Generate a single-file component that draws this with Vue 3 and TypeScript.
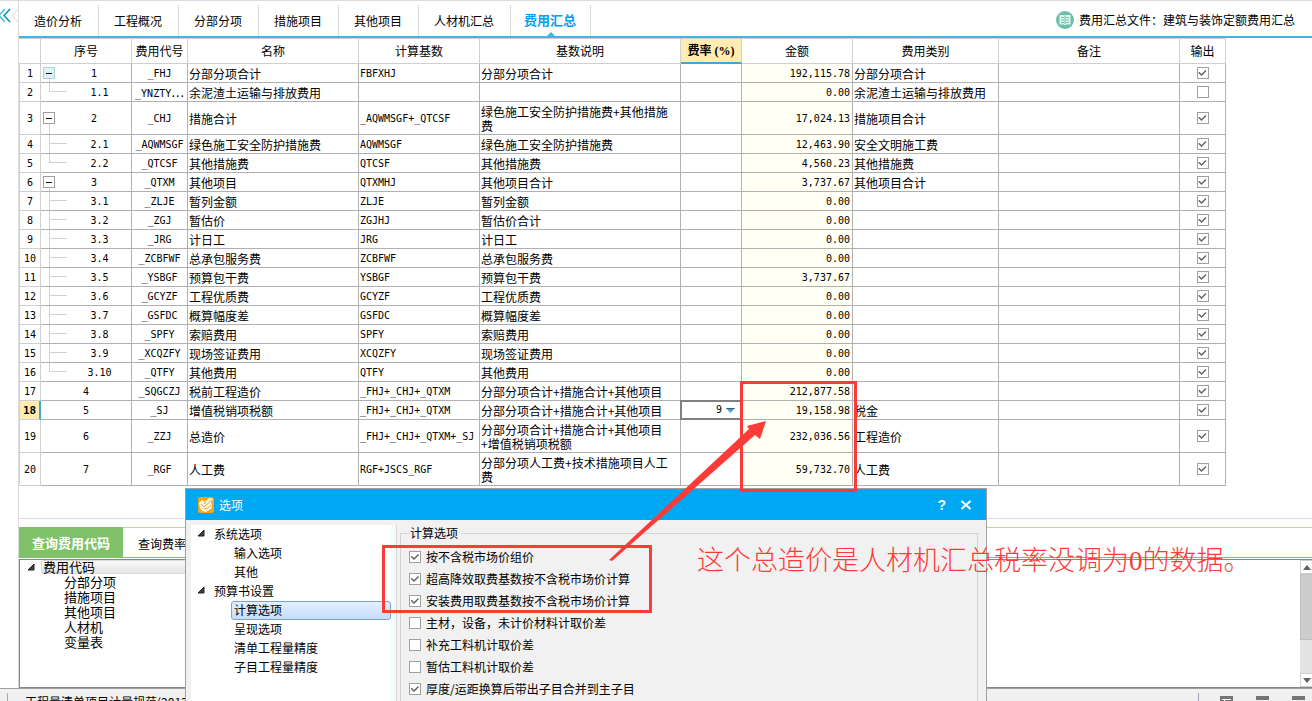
<script setup lang="ts">
import { ref } from 'vue'

type Kind = 'parent' | 'child' | 'last' | 'plain'

interface FeeRow {
  no: string
  kind: Kind
  code: string
  name: string
  base: string
  desc: string
  amount: string
  category: string
  output: boolean
}

const tabs = ['造价分析', '工程概况', '分部分项', '措施项目', '其他项目', '人材机汇总', '费用汇总']
const activeTab = ref('费用汇总')

const headers = ['', '序号', '费用代号', '名称', '计算基数', '基数说明', '费率 (%)', '金额', '费用类别', '备注', '输出']

const row = (
  no: string, kind: Kind, code: string, name: string, base: string,
  desc: string, amount: string, category = '', output = true,
): FeeRow => ({ no, kind, code, name, base, desc, amount, category, output })

const rows = ref<FeeRow[]>([
  row('1', 'parent', '_FHJ', '分部分项合计', 'FBFXHJ', '分部分项合计', '192,115.78', '分部分项合计'),
  row('1.1', 'last', '_YNZTY…', '余泥渣土运输与排放费用', '', '', '0.00', '余泥渣土运输与排放费用', false),
  row('2', 'parent', '_CHJ', '措施合计', '_AQWMSGF+_QTCSF', '绿色施工安全防护措施费+其他措施费', '17,024.13', '措施项目合计'),
  row('2.1', 'child', '_AQWMSGF', '绿色施工安全防护措施费', 'AQWMSGF', '绿色施工安全防护措施费', '12,463.90', '安全文明施工费'),
  row('2.2', 'last', '_QTCSF', '其他措施费', 'QTCSF', '其他措施费', '4,560.23', '其他措施费'),
  row('3', 'parent', '_QTXM', '其他项目', 'QTXMHJ', '其他项目合计', '3,737.67', '其他项目合计'),
  row('3.1', 'child', '_ZLJE', '暂列金额', 'ZLJE', '暂列金额', '0.00'),
  row('3.2', 'child', '_ZGJ', '暂估价', 'ZGJHJ', '暂估价合计', '0.00'),
  row('3.3', 'child', '_JRG', '计日工', 'JRG', '计日工', '0.00'),
  row('3.4', 'child', '_ZCBFWF', '总承包服务费', 'ZCBFWF', '总承包服务费', '0.00'),
  row('3.5', 'child', '_YSBGF', '预算包干费', 'YSBGF', '预算包干费', '3,737.67'),
  row('3.6', 'child', '_GCYZF', '工程优质费', 'GCYZF', '工程优质费', '0.00'),
  row('3.7', 'child', '_GSFDC', '概算幅度差', 'GSFDC', '概算幅度差', '0.00'),
  row('3.8', 'child', '_SPFY', '索赔费用', 'SPFY', '索赔费用', '0.00'),
  row('3.9', 'child', '_XCQZFY', '现场签证费用', 'XCQZFY', '现场签证费用', '0.00'),
  row('3.10', 'last', '_QTFY', '其他费用', 'QTFY', '其他费用', '0.00'),
  row('4', 'plain', '_SQGCZJ', '税前工程造价', '_FHJ+_CHJ+_QTXM', '分部分项合计+措施合计+其他项目', '212,877.58'),
  row('5', 'plain', '_SJ', '增值税销项税额', '_FHJ+_CHJ+_QTXM', '分部分项合计+措施合计+其他项目', '19,158.98', '税金'),
  row('6', 'plain', '_ZZJ', '总造价', '_FHJ+_CHJ+_QTXM+_SJ', '分部分项合计+措施合计+其他项目+增值税销项税额', '232,036.56', '工程造价'),
  row('7', 'plain', '_RGF', '人工费', 'RGF+JSCS_RGF', '分部分项人工费+技术措施项目人工费', '59,732.70', '人工费'),
])
const activeRow = 17
const rate = ref('9')

const codeGroups = ['分部分项', '措施项目', '其他项目', '人材机', '变量表']

const optionTree = [
  { label: '系统选项', items: ['输入选项', '其他'] },
  { label: '预算书设置', items: ['计算选项', '呈现选项', '清单工程量精度', '子目工程量精度'] },
]
const activeOption = ref('计算选项')

const options = ref([
  { label: '按不含税市场价组价', on: true },
  { label: '超高降效取费基数按不含税市场价计算', on: true },
  { label: '安装费用取费基数按不含税市场价计算', on: true },
  { label: '主材，设备，未计价材料计取价差', on: false },
  { label: '补充工料机计取价差', on: false },
  { label: '暂估工料机计取价差', on: false },
  { label: '厚度/运距换算后带出子目合并到主子目', on: true },
])
</script>

<template>
  <div class="app">
    <div class="workspace">
      <aside class="rail">
        <button class="collapse" aria-label="收起">
          <svg width="19" height="26" viewBox="0 0 19 26" fill="none">
            <path d="M5 6L-1 12.500L5 19" stroke="#4dbbe0" stroke-width="1.500" />
            <path d="M10 6L4 12.500L10 19" stroke="#0e8fb5" stroke-width="1.500" />
            <path d="M18.500 5.500L12.500 12.500L18.500 19.500" stroke="#d8d8d8" />
          </svg>
        </button>
      </aside>

      <main class="main">
        <header class="topbar">
          <nav class="tabs">
            <button
              v-for="t in tabs" :key="t" class="tab" :class="{ active: t === activeTab }"
              @click="activeTab = t"
            >{{ t }}</button>
          </nav>
          <div class="file">
            <svg width="18" height="18" viewBox="0 0 18 18">
              <circle cx="9" cy="9" r="9" fill="#6bbfa9" />
              <path d="M3.500 4H8L9 4.500L10 4H14.500V13.500H10L9 14.500L8 13.500H3.500Z" fill="#e3f5f0" />
              <path d="M5 6.500H8M5 9H8M5 11.500H8M10 6.500H13M10 9H13M10 11.500H13M9 5V13" stroke="#6bbfa9" />
            </svg>
            <span>费用汇总文件：建筑与装饰定额费用汇总</span>
          </div>
        </header>

        <section class="grid-area">
          <table class="grid">
            <colgroup>
              <col class="c0"><col class="c1"><col class="c2"><col class="c3"><col class="c4"><col class="c5">
              <col class="c6"><col class="c7"><col class="c8"><col class="c9"><col class="c10">
            </colgroup>
            <thead>
              <tr>
                <th v-for="(h, i) in headers" :key="i" :class="{ current: i === 6 }">{{ h }}</th>
              </tr>
            </thead>
            <tbody>
              <tr v-for="(r, i) in rows" :key="r.no">
                <th class="index mono" :class="{ current: i === activeRow }">{{ i + 1 }}</th>
                <td class="seq mono" :class="r.kind">
                  <button v-if="r.kind === 'parent'" class="toggle" :class="{ hot: i === 0 }" aria-label="折叠"></button>{{ r.no }}
                </td>
                <td class="code mono">{{ r.code.replace('…', '') }}<span v-if="r.code.endsWith('…')" class="more">…</span></td>
                <td>{{ r.name }}</td>
                <td class="mono">{{ r.base }}</td>
                <td>{{ r.desc }}</td>
                <td class="rate">
                  <div v-if="i === activeRow" class="rate-box">
                    <select v-model="rate" class="mono" aria-label="费率">
                      <option>9</option>
                      <option>0</option>
                    </select>
                    <svg width="9" height="5" viewBox="0 0 9 5"><path d="M0 0H9L4.500 5Z" fill="#4a9fd0" /><path d="M0 0H9L8 1H1Z" fill="#2c5f80" /></svg>
                  </div>
                </td>
                <td class="amount mono">{{ r.amount }}</td>
                <td>{{ r.category }}</td>
                <td></td>
                <td class="out"><input v-model="r.output" type="checkbox" class="check" :aria-label="'输出 ' + r.name"></td>
              </tr>
            </tbody>
          </table>
        </section>

        <section class="query">
          <nav class="query-tabs">
            <button class="qtab on">查询费用代码</button>
            <button class="qtab">查询费率信息</button>
          </nav>
          <div class="query-body">
            <ul class="codes">
              <li class="root">
                <svg class="tri" width="7" height="7" viewBox="0 0 7 7"><path d="M6 0V6H0Z" fill="#404040" stroke="#222" /></svg>
                <span>费用代码</span>
              </li>
              <li v-for="g in codeGroups" :key="g" class="leaf">{{ g }}</li>
            </ul>
            <div class="scroll" aria-hidden="true">
              <span class="arrow"><svg width="8" height="5" viewBox="0 0 8 5"><path d="M0 5L4 0L8 5Z" fill="#606060" /></svg></span>
              <span class="thumb"></span>
              <span class="arrow end"><svg width="8" height="5" viewBox="0 0 8 5"><path d="M0 0L4 5L8 0Z" fill="#606060" /></svg></span>
            </div>
          </div>
        </section>
      </main>
    </div>

    <footer class="status">
      <span class="status-text">工程量清单项目计量规范(2013)</span>
      <div class="status-icons">
        <svg width="13" height="12" viewBox="0 0 13 12"><path d="M0 0H13V12H0Z" fill="#757575" /><path d="M2 3.500H11M4.500 3.500V12M7 6.500H11" stroke="#fff" /></svg>
        <svg width="13" height="12" viewBox="0 0 13 12"><path d="M0 0H13V4H0Z" fill="#757575" /></svg>
        <svg width="13" height="12" viewBox="0 0 13 12"><path d="M0 0H13V4H0Z" fill="#757575" /></svg>
      </div>
    </footer>

    <div class="dialog" role="dialog" aria-label="选项">
      <header class="title">
        <svg width="16" height="16" viewBox="0 0 16 16">
          <rect width="16" height="16" rx="2" fill="#f7a61c" />
          <path d="M1 6L4 3L7 5L11 1L15 2L13 6L14 8L13 12L8 15L4 14L2 11Z" fill="#fff6e0" />
          <path d="M3 7L6 10L14 3M6 12L10 11L13 8M8 5L6 7" stroke="#f0a22c" fill="none" />
        </svg>
        <span>选项</span>
        <button class="help" aria-label="帮助">?</button>
        <button class="close" aria-label="关闭">
          <svg width="12" height="10" viewBox="0 0 12 10"><path d="M1.500 1L10.500 9M10.500 1L1.500 9" stroke="#fff" stroke-width="2" /></svg>
        </button>
      </header>
      <div class="dialog-body">
        <div class="option-tree">
          <template v-for="g in optionTree" :key="g.label">
            <div class="group">
              <svg width="7" height="7" viewBox="0 0 7 7"><path d="M6 0V6H0Z" fill="#404040" stroke="#222" /></svg>
              <span>{{ g.label }}</span>
            </div>
            <button
              v-for="it in g.items" :key="it" class="item" :class="{ selected: it === activeOption }"
              @click="activeOption = it"
            >{{ it }}</button>
          </template>
        </div>
        <fieldset class="settings">
          <legend>计算选项</legend>
          <label v-for="o in options" :key="o.label">
            <input v-model="o.on" type="checkbox" class="check"><span>{{ o.label }}</span>
          </label>
        </fieldset>
      </div>
    </div>

    <div class="mark totals"></div>
    <div class="mark choices"></div>
    <svg class="pointer" width="160" height="142" viewBox="0 0 160 142">
      <path d="M0 139L140 8L138 5L157 0L151 18L146 14L3 140Z" fill="#fb3b38" />
    </svg>
    <p class="note">这个总造价是人材机汇总税率没调为0的数据。</p>
  </div>
</template>

<style>
html,
body {
  margin: 0;
  overflow: hidden;
}
</style>

<style scoped>
.app,
.app * {
  box-sizing: border-box;
}

.app {
  position: relative;
  display: flex;
  flex-direction: column;
  height: 100vh;
  overflow: hidden;
  background: #fff;
  color: #000;
  font: 12px/14px "Noto Sans CJK SC", sans-serif;
}

button,
select,
input {
  margin: 0;
  padding: 0;
  border: 0;
  border-radius: 0;
  background: none;
  color: inherit;
  font: inherit;
}

svg {
  display: block;
  flex: none;
}

.mono {
  font-family: "DejaVu Sans Mono", "Noto Sans CJK SC", monospace;
  font-size: 10px;
}

.workspace {
  display: flex;
  flex: 1;
  min-height: 0;
  border-top: 1px solid #dcdcdc;
}

.rail {
  flex: none;
  width: 19px;
  border-right: 1px solid #dcdcdc;
}

.collapse {
  display: block;
  width: 19px;
  margin-top: 2px;
  overflow: hidden;
}

.main {
  display: flex;
  flex: 1;
  flex-direction: column;
  min-width: 0;
}

/* top tabs */
.topbar {
  display: flex;
  flex: none;
  justify-content: space-between;
  height: 37px;
  padding-right: 17px;
  border-bottom: 2px solid #41b4e4;
}

.tabs {
  display: flex;
  padding-top: 4px;
}

.tab {
  position: relative;
  padding: 0 16px 0 15px;
  border-right: 1px solid #dcdcdc;
  white-space: nowrap;
}

.tab.active {
  padding: 0 14px 1px 13px;
  color: #00a2ee;
  font-size: 13px;
  font-weight: 700;
}

.tab.active::after {
  content: "";
  position: absolute;
  bottom: 0;
  left: 50%;
  margin-left: -4px;
  border: 4px solid transparent;
  border-top: 0;
  border-bottom-color: #41b4e4;
}

.file {
  display: flex;
  align-items: center;
  gap: 5px;
  padding-top: 3px;
  white-space: nowrap;
}

/* fee table */
.grid-area {
  flex: none;
  height: 481px;
  border-bottom: 1px solid #dcdcdc;
}

.grid {
  width: 1207px;
  border-collapse: separate;
  border-spacing: 0;
  table-layout: fixed;
}

.c0 { width: 22px; }
.c1 { width: 91px; }
.c2 { width: 56px; }
.c3 { width: 171px; }
.c4 { width: 121px; }
.c5 { width: 201px; }
.c6 { width: 61px; }
.c7 { width: 111px; }
.c8 { width: 146px; }
.c9 { width: 181px; }
.c10 { width: 46px; }

.grid th {
  padding: 0;
  border-right: 1px solid #d0d0d0;
  border-bottom: 1px solid #d0d0d0;
  font-weight: 400;
}

.grid thead th {
  height: 26px;
  border-top: 1px solid #d0d0d0;
}

.grid thead th.current {
  border-bottom: 2px solid #3fa9d6;
  background: #ffecb0;
  font-family: "Liberation Serif", "Noto Sans CJK SC", serif;
  font-weight: 700;
}

.grid td {
  height: 19px;
  padding: 3px 3px 1px 1px;
  border-right: 1px solid #b0b0b0;
  border-bottom: 1px solid #b0b0b0;
}

.grid .index {
  padding-top: 2px;
  border-left: 1px solid #d0d0d0;
}

.grid .index.current {
  border-right: 2px solid #3fa9d6;
  background: #ffecb0;
  font-size: 11px;
  font-weight: 700;
}

.grid .seq {
  position: relative;
  padding: 2px 0 0;
  text-align: center;
}

.grid .seq.parent {
  padding-left: 16px;
}

.grid .seq.child,
.grid .seq.last {
  padding-left: 27px;
}

.seq.parent::before,
.seq.child::before,
.seq.last::before {
  content: "";
  position: absolute;
  top: 0;
  bottom: 0;
  left: 8px;
  border-left: 1px solid #d0d0d0;
}

.seq.parent::before {
  top: 50%;
}

.seq.last::before {
  bottom: 50%;
}

.seq.child::after,
.seq.last::after {
  content: "";
  position: absolute;
  top: 50%;
  left: 8px;
  width: 18px;
  margin-top: -1px;
  border-top: 1px solid #d0d0d0;
}

.toggle {
  position: absolute;
  top: 50%;
  left: 2px;
  width: 12px;
  height: 12px;
  margin-top: -6px;
  border: 1px solid #a0a0a0;
  background: linear-gradient(#111, #111) center / 6px 1px no-repeat #fff;
}

.toggle.hot {
  border-color: #a9d3df;
  background-color: #dff1f6;
}

.grid .code {
  padding: 2px 0 0;
  text-align: center;
  white-space: nowrap;
}

.more {
  font: 12px/12px "Noto Sans CJK SC", sans-serif;
}

.grid .rate {
  position: relative;
  padding: 0;
}

.rate-box {
  position: absolute;
  z-index: 1;
  inset: -1px;
  display: flex;
  align-items: center;
  gap: 4px;
  padding-right: 5px;
  border: 2px solid #808080;
  background: #fff;
}

.rate-box select {
  flex: 1;
  min-width: 0;
  appearance: none;
  text-align: right;
  text-align-last: right;
}

.grid .amount {
  padding-right: 2px;
  background: #fffff4;
  text-align: right;
}

.grid .out {
  padding: 0;
}

.out .check {
  display: block;
  margin: 0 auto;
}

.check {
  flex: none;
  width: 12px;
  height: 12px;
  appearance: none;
  border: 1px solid #a0a0a0;
  background: #fff;
}

.check:checked::before {
  content: "";
  display: block;
  width: 10px;
  height: 10px;
  background: #606470;
  clip-path: polygon(1px 4px, 2px 4px, 4px 6px, 8px 2px, 9px 3px, 4px 8px, 1px 5px);
}

/* code lookup */
.query {
  display: flex;
  flex: 1;
  flex-direction: column;
  min-height: 0;
  padding-top: 8px;
}

.query-tabs {
  display: flex;
  flex: none;
  height: 31px;
  border-top: 1px solid #b6dd9c;
  border-bottom: 1px solid #7dc067;
}

.qtab {
  padding: 3px 15px 0;
  white-space: nowrap;
}

.qtab.on {
  width: 104px;
  margin-top: -1px;
  padding: 2px 0 0;
  background: #7fc269;
  color: #fff;
  font-size: 13px;
  font-weight: 700;
}

.query-body {
  display: flex;
  flex: 1;
  min-height: 0;
  margin-top: 1px;
  border: 1px solid #828790;
  border-right: 0;
}

.codes {
  flex: 1;
  margin: 0;
  padding: 0;
  list-style: none;
  font-size: 13px;
  line-height: 15px;
}

.root {
  display: flex;
  align-items: center;
  gap: 6px;
  height: 14px;
  max-width: 600px;
  padding-left: 8px;
}

.root span {
  flex: 1;
  padding-left: 1px;
  border: 1px solid #dadada;
  border-radius: 2px;
  background: linear-gradient(#fafafa, #e5e5e5);
  line-height: 12px;
}

.leaf {
  padding-left: 44px;
}

.scroll {
  display: flex;
  flex: none;
  flex-direction: column;
  width: 12px;
  background: #e3e3e3;
}

.arrow {
  display: flex;
  align-items: center;
  justify-content: center;
  height: 14px;
  border: 1px solid #d0d0d0;
  border-right: 0;
  background: #fff;
}

.arrow.end {
  margin-top: auto;
}

.thumb {
  height: 66px;
  border: 1px solid #c0c0c0;
  border-right: 0;
  background: #cdcdcd;
}

/* status bar */
.status {
  display: flex;
  flex: none;
  align-items: flex-start;
  justify-content: space-between;
  height: 13px;
  overflow: hidden;
  border-top: 1px solid #a0a0a0;
  background: #f0f0f0;
}

.status-text {
  margin: 4px 0 0 7px;
  padding-left: 17px;
  border-left: 1px solid #a0a8b8;
  line-height: 18px;
}

.status-icons {
  display: flex;
  gap: 23px;
  margin-top: 4px;
  padding: 3px 7px 0 21px;
  border-left: 1px solid #a0a8b8;
}

/* options window */
.dialog {
  position: absolute;
  top: 488px;
  bottom: 0;
  left: 185px;
  z-index: 2;
  display: flex;
  flex-direction: column;
  width: 802px;
  overflow: hidden;
  border: 1px solid #a0a0a0;
  border-bottom: 0;
  background: #f1f1f1;
}

.title {
  display: flex;
  flex: none;
  align-items: center;
  height: 31px;
  padding: 0 14px 0 12px;
  background: #00a8f3;
  color: #fff;
}

.title span {
  margin-left: 5px;
}

.help {
  margin-left: auto;
  font: 700 14px/16px "Liberation Sans", sans-serif;
}

.close {
  margin-left: 14px;
}

.dialog-body {
  display: flex;
  flex: 1;
  min-height: 0;
  padding: 5px 8px 0 5px;
}

.option-tree {
  flex: none;
  width: 206px;
  border-right: 1px solid #d5d5d5;
  background: linear-gradient(90deg, #fff 200px, #effbfc 200px);
}

.group {
  display: flex;
  align-items: center;
  gap: 9px;
  height: 19px;
  padding: 0 0 2px 7px;
}

.item {
  display: block;
  width: 160px;
  height: 19px;
  margin-left: 40px;
  padding: 0 0 2px 2px;
  border: 1px solid transparent;
  border-radius: 3px;
  text-align: left;
  line-height: 15px;
}

.item.selected {
  border-color: #7da2ce;
  background: linear-gradient(#e3efff, #c5defc);
}

.settings {
  flex: 1;
  height: 240px;
  min-width: 0;
  margin: 1px 0 0 3px;
  padding: 6px 8px;
  border: 1px solid #d3d3d3;
}

.settings legend {
  padding: 0 3px 0 1px;
}

.settings label {
  display: flex;
  align-items: center;
  gap: 5px;
  height: 22px;
}

/* annotations */
.mark {
  position: absolute;
  z-index: 3;
  border: 3px solid #fb3b38;
}

.totals {
  top: 381px;
  left: 740px;
  width: 117px;
  height: 111px;
}

.choices {
  top: 545px;
  left: 382px;
  width: 270px;
  height: 68px;
}

.pointer {
  position: absolute;
  top: 421px;
  left: 609px;
  z-index: 3;
}

.note {
  position: absolute;
  top: 544px;
  left: 697px;
  z-index: 3;
  margin: 0;
  color: #fb3b38;
  font: 300 27px/34px "Liberation Serif", "Noto Sans CJK SC", serif;
  white-space: nowrap;
}
</style>
